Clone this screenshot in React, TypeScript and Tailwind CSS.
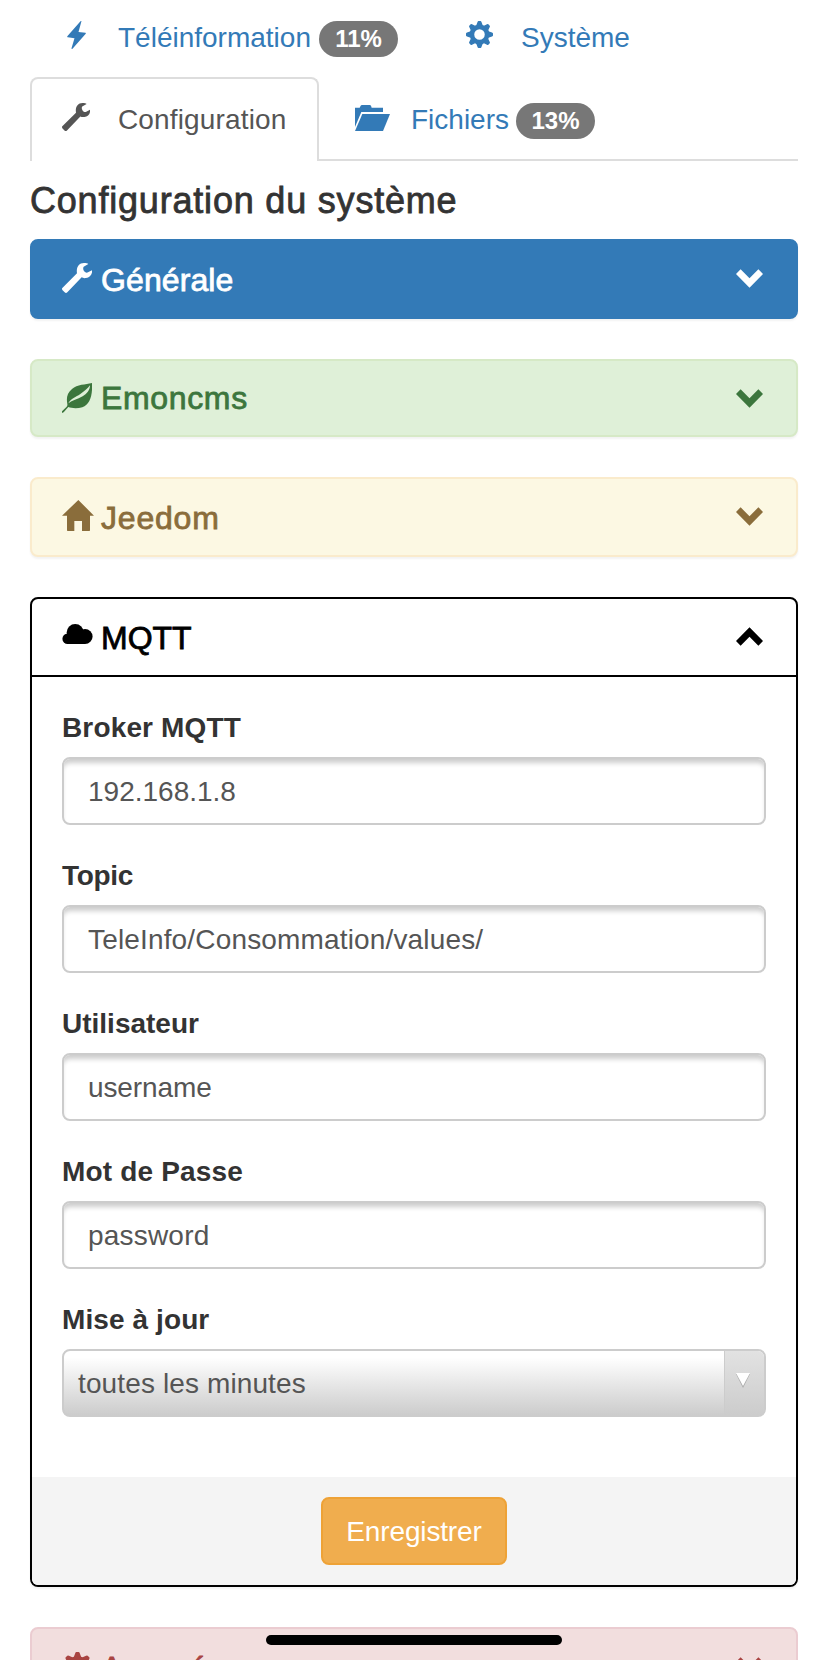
import type { ReactNode } from "react";
import clsx from "clsx";

type IconProps = { className?: string };

function BoltIcon({ className }: IconProps) {
  return (
    <svg viewBox="0 0 56 84" fill="currentColor" className={className}>
      <path d="M43 0 34 33 55 35Q57 36 55 39L16 83Q13 85 13 82L22 52 2 49Q-1 48 1 45L40 1Q42-1 43 0Z" />
    </svg>
  );
}

function WrenchIcon({ className }: IconProps) {
  return (
    <svg viewBox="0 0 90 90" fill="currentColor" className={className}>
      <path d="M1 75 45 31C42 14 50 0 66 0 72 0 77 1 79 3L65 11C62 16 64 23 69 27 73 30 76 29 78 28L90 22C92 34 83 44 72 45 67 46 62 45 59 43L16 88Q12 92 8 88L1 81Q-1 77 1 75Z" />
    </svg>
  );
}

function GearIcon({ className }: IconProps) {
  return (
    <svg viewBox="-41 -41 82 82" fill="currentColor" className={className}>
      <circle r="23" fill="none" stroke="currentColor" strokeWidth="14" />
      {[0, 45, 90, 135, 180, 225, 270, 315].map((angle) => (
        <path
          key={angle}
          d="M-10-27-6-38Q-5-41-3-41H3Q5-41 6-38L10-27Z"
          transform={`rotate(${angle})`}
        />
      ))}
    </svg>
  );
}

function FolderIcon({ className }: IconProps) {
  return (
    <svg viewBox="0 0 105 78" fill="currentColor" className={className}>
      <path d="M0 8H14L17 2Q18 0 21 0H44Q47 0 48 2L50 8H84V21H19L0 66Z" />
      <path d="M22 27H105L84 78H0Z" />
    </svg>
  );
}

function LeafIcon({ className }: IconProps) {
  return (
    <svg viewBox="0 0 90 90" fill="currentColor" className={className}>
      <path
        fillRule="evenodd"
        d="M90 0C70 5 46 4 30 18 14 31 13 46 16 63Q17 68 14 71L0 85V90L5 88 19 72C28 76 46 77 61 73 85 64 92 35 90 0ZM19 61C26 48 43 41 54 34 66 26 78 15 84 7 84 22 74 33 62 40 46 49 31 51 19 61Z"
      />
    </svg>
  );
}

function HomeIcon({ className }: IconProps) {
  return (
    <svg viewBox="0 0 96 93" fill="currentColor" className={className}>
      <path d="M49 0 96 47H84V91Q84 93 82 93H60V63H37V93H17Q15 93 15 91V47H0Z" />
    </svg>
  );
}

function CloudIcon({ className }: IconProps) {
  return (
    <svg viewBox="0 0 92 61" fill="currentColor" className={className}>
      <circle cx="39" cy="26" r="26" />
      <circle cx="69" cy="38" r="23" />
      <circle cx="16" cy="45" r="16" />
      <path d="M16 61V36H69V61Z" />
    </svg>
  );
}

function ChevronIcon({ className }: IconProps) {
  return (
    <svg viewBox="0 0 82 56" fill="currentColor" className={className}>
      <path d="M14 0 41 27 68 0 82 14 41 56 0 14Z" />
    </svg>
  );
}

function Badge({ children }: { children: ReactNode }) {
  return (
    <span className="h-9 w-[79px] rounded-full bg-[#777] text-center text-2xl leading-9 font-bold text-white">
      {children}
    </span>
  );
}

type HeadingProps = {
  icon: ReactNode;
  title: string;
  className?: string;
  titleClass?: string;
  open?: boolean;
};

function PanelHeading({
  icon,
  title,
  className,
  titleClass = "mt-[22px]",
  open,
}: HeadingProps) {
  return (
    <div className={clsx("flex items-start pr-[33px] pl-[30px]", className)}>
      <span className="w-[39px] shrink-0">{icon}</span>
      <h4
        className={clsx(
          "grow text-[32px] leading-[35px] [-webkit-text-stroke:0.8px]",
          titleClass
        )}
      >
        {title}
      </h4>
      <ChevronIcon
        className={clsx("mt-7 h-[19px] w-[27px]", open && "rotate-180")}
      />
    </div>
  );
}

const fields = [
  {
    id: "broker",
    label: "Broker MQTT",
    labelClass: "tracking-[0.15px]",
    value: "192.168.1.8",
    valueClass: "",
  },
  {
    id: "topic",
    label: "Topic",
    labelClass: "tracking-[-0.3px]",
    value: "TeleInfo/Consommation/values/",
    valueClass: "tracking-[0.16px]",
  },
  {
    id: "user",
    label: "Utilisateur",
    labelClass: "",
    value: "username",
    valueClass: "tracking-[-0.1px]",
  },
  {
    id: "pass",
    label: "Mot de Passe",
    labelClass: "tracking-[0.17px]",
    value: "password",
    valueClass: "tracking-[0.2px]",
  },
];

export default function App() {
  return (
    <div className="relative h-[1660px] w-[828px] overflow-hidden bg-white px-[30px] font-['Liberation_Sans',Arial,sans-serif] text-[28px] leading-10 text-[#333]">
      <nav className="text-[#337ab7]">
        <div className="flex h-[77px] items-start">
          <BoltIcon className="mt-[21px] ml-[37px] h-7 w-[19px]" />
          <span className="mt-[18px] ml-8 w-[201px]">Téléinformation</span>
          <span className="mt-[21px] flex">
            <Badge>11%</Badge>
          </span>
          <GearIcon className="mt-[21px] ml-[68px] h-[27px] w-[27px]" />
          <span className="mt-[18px] ml-[28px]">Système</span>
        </div>
        <div className="flex h-[84px] items-start">
          <div className="flex h-[84px] w-[289px] items-start rounded-t-lg border-2 border-b-0 border-[#ddd] text-[#555]">
            <WrenchIcon className="mt-6 ml-[30px] h-7 w-7" />
            <span className="mt-[21px] ml-7 tracking-[0.15px]">Configuration</span>
          </div>
          <div className="flex h-[84px] grow items-start border-b-2 border-[#ddd]">
            <FolderIcon className="mt-7 ml-9 h-[26px] w-[35px]" />
            <span className="mt-[23px] ml-[21px] w-[105px]">Fichiers</span>
            <span className="mt-[26px] flex">
              <Badge>13%</Badge>
            </span>
          </div>
        </div>
      </nav>

      <h3 className="mt-5 mb-[18px] text-4xl leading-10 tracking-[0.8px] [-webkit-text-stroke:0.8px]">
        Configuration du système
      </h3>

      <div className="flex flex-col gap-10">
        <section className="h-20 rounded-lg border-2 border-[#337ab7] bg-[#337ab7] text-white shadow-[0_2px_2px_rgba(0,0,0,0.05)]">
          <PanelHeading
            icon={<WrenchIcon className="mt-[22px] h-[30px] w-[30px]" />}
            title="Générale"
            titleClass="mt-[22px] tracking-[0.1px]"
          />
        </section>
        <section className="h-[78px] rounded-lg border-2 border-[#d6e9c6] bg-[#dff0d8] text-[#3c763d] shadow-[0_2px_2px_rgba(0,0,0,0.05)]">
          <PanelHeading
            icon={<LeafIcon className="mt-[22px] h-[30px] w-[30px]" />}
            title="Emoncms"
            titleClass="mt-5 tracking-[0.65px]"
          />
        </section>
        <section className="h-20 rounded-lg border-2 border-[#faebcc] bg-[#fcf8e3] text-[#8a6d3b] shadow-[0_2px_2px_rgba(0,0,0,0.05)]">
          <PanelHeading
            icon={<HomeIcon className="mt-[21px] h-[31px] w-8" />}
            title="Jeedom"
            titleClass="mt-[22px] tracking-[0.8px]"
          />
        </section>

        <section className="h-[990px] overflow-hidden rounded-lg border-2 border-black shadow-[0_2px_2px_rgba(0,0,0,0.05)]">
          <PanelHeading
            className="h-[78px] border-b-2 border-black text-black"
            icon={<CloudIcon className="mt-[25px] h-5 w-[31px]" />}
            title="MQTT"
            open
          />
          <form className="h-[800px] px-[30px] pt-[31px]">
            {fields.map((field) => (
              <div key={field.id} className="h-[148px]">
                <label
                  htmlFor={field.id}
                  className={clsx("block h-[49px] font-bold", field.labelClass)}
                >
                  {field.label}
                </label>
                <input
                  id={field.id}
                  defaultValue={field.value}
                  className={clsx(
                    "block h-[68px] w-full rounded-lg border-2 border-[#ccc] bg-white px-6 pt-0.5 text-[#555] shadow-[inset_0_6px_5px_-2px_rgba(0,0,0,0.2)] outline-none",
                    field.valueClass
                  )}
                />
              </div>
            ))}
            <span className="block h-[49px] font-bold tracking-[0.1px]">
              Mise à jour
            </span>
            <div className="flex h-[68px] overflow-hidden rounded-lg border-2 border-[#ccc] bg-linear-to-b from-white from-10% to-[#ccc] text-[#555]">
              <span className="mt-[13px] grow pl-[14px] tracking-[0.12px]">
                toutes les minutes
              </span>
              <span className="w-10 border-l border-[#ccc] bg-linear-to-b from-[#e2e2e2] to-[#ccc]">
                <svg viewBox="0 0 14 15" className="mt-[22px] ml-[11px] h-[15px] w-[14px]">
                  <path d="M0 1H14L7 15Z" fill="#aaa" />
                  <path d="M0 0H14L7 13Z" fill="#fff" />
                </svg>
              </span>
            </div>
          </form>
          <div className="flex h-[108px] justify-center bg-[#f4f4f4] pt-5">
            <button className="h-[68px] w-[186px] rounded-lg border-2 border-[#eea236] bg-[#f0ad4e] pt-0.5 tracking-[-0.15px] text-white">
              Enregistrer
            </button>
          </div>
        </section>

        <section className="h-20 rounded-lg border-2 border-[#ebccd1] bg-[#f2dede] text-[#a94442]">
          <PanelHeading
            icon={<GearIcon className="mt-[23px] h-[31px] w-[31px]" />}
            title="Avancée"
          />
        </section>
      </div>

      <div className="absolute top-[1635px] left-[266px] h-[10px] w-[296px] rounded-full bg-black" />
    </div>
  );
}
